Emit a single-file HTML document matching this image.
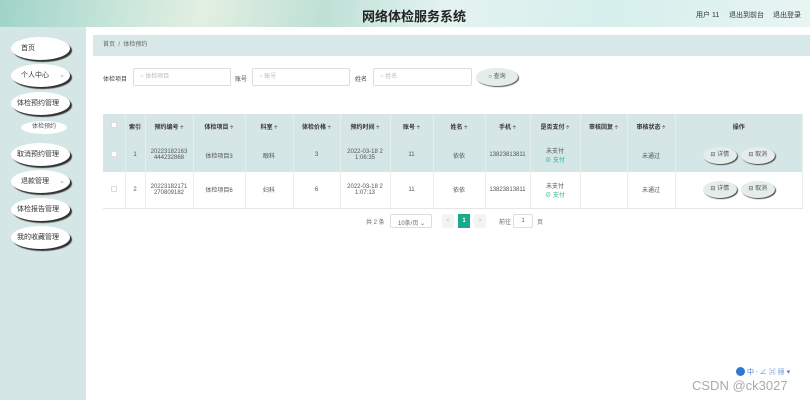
<!DOCTYPE html>
<html><head><meta charset="utf-8"><style>
*{margin:0;padding:0;box-sizing:border-box}
body{width:810px;height:400px;overflow:hidden;background:#fff;font-family:"Liberation Sans","Noto Sans CJK SC",sans-serif;font-size:6px;color:#555;position:relative}
.hdr{position:absolute;left:0;top:0;width:810px;height:27px;background:linear-gradient(100deg,#9fd3c9 0%,#c9e6da 15%,#e3efe2 25%,#bfe0d6 40%,#e4f3f0 55%,#d6efec 75%,#e8f5f3 100%)}
.title{position:absolute;left:362px;top:6px;font-size:13px;font-weight:bold;color:#222}
.hr{position:absolute;top:10px;font-size:7px;color:#333}
.side{position:absolute;left:0;top:27px;width:86px;height:373px;background:#d5e6e6}
.nb{position:absolute;left:11px;width:59px;height:23px;background:#fff;border-radius:50%;box-shadow:2px 2px 1px #333;font-size:7px;color:#333;line-height:23px;padding-left:10px}
.sub{position:absolute;left:21px;top:121px;width:46px;height:13px;background:#fff;border-radius:50%;font-size:6px;line-height:13px;text-align:center}
.bc{position:absolute;left:93px;top:35px;width:717px;height:21px;background:#d8e8e8;font-size:6px;line-height:21px;padding-left:10px;color:#666}
.lbl{position:absolute;top:74px;font-size:6px;color:#444}
.inp{position:absolute;top:68px;height:18px;border:1px solid #ddd;border-radius:2px;font-size:6px;color:#bbb;line-height:16px;padding-left:6px}
.btn{position:absolute;left:476px;top:68px;width:42px;height:18px;border-radius:50%;background:#e4ecec;box-shadow:1px 1px 1px #555;font-size:6px;line-height:18px;text-align:center;color:#555}
table{position:absolute;left:103px;top:114px;width:700px;border-collapse:collapse;font-size:6px;text-align:center}
td,th{border-right:1px solid #e8eeee;color:#555;font-weight:normal;padding:0}
th{height:24px;background:#d6e6e6;font-weight:bold;color:#333}
tr.r1 td{background:#d4e6e6;height:34px}
tr.r2 td{background:#fff;height:36px;border-bottom:1px solid #e6e6e6}
.cb{display:inline-block;width:6px;height:6px;background:#fff;border:1px solid #ddd}
.ob{display:inline-block;width:34px;height:17px;border-radius:50%;background:#e4ecec;box-shadow:1px 1px 1px #444;line-height:17px;margin:0 2px;font-size:6px}
.g{color:#2cb08a}
.pg{position:absolute;top:214px;font-size:6px;color:#666}
</style></head><body>
<div class="hdr"></div>
<div class="title">网络体检服务系统</div>
<div class="hr" style="left:696px">用户 11</div>
<div class="hr" style="left:729px">退出到前台</div>
<div class="hr" style="left:773px">退出登录</div>
<div class="side"></div>
<div class="nb" style="top:37px">首页</div>
<div class="nb" style="top:64px">个人中心 <span style="margin-left:8px;color:#999">⌄</span></div>
<div class="nb" style="top:92px;padding-left:6px">体检预约管理</div>
<div class="sub">体检预约</div>
<div class="nb" style="top:143px;padding-left:6px">取消预约管理</div>
<div class="nb" style="top:170px">退款管理 <span style="margin-left:8px;color:#999">⌄</span></div>
<div class="nb" style="top:198px;padding-left:6px">体检报告管理</div>
<div class="nb" style="top:226px;padding-left:6px">我的收藏管理</div>
<div class="bc">首页 &nbsp;/&nbsp; 体检预约</div>
<div class="lbl" style="left:103px">体检项目</div>
<div class="inp" style="left:133px;width:98px">○ 体检项目</div>
<div class="lbl" style="left:235px">账号</div>
<div class="inp" style="left:252px;width:98px">○ 账号</div>
<div class="lbl" style="left:355px">姓名</div>
<div class="inp" style="left:373px;width:99px">○ 姓名</div>
<div class="btn">○ 查询</div>
<table>
<tr><th style="width:22px"><span class="cb"></span></th><th style="width:20px">索引</th><th style="width:48px">预约编号 ÷</th><th style="width:52px">体检项目 ÷</th><th style="width:48px">科室 ÷</th><th style="width:47px">体检价格 ÷</th><th style="width:50px">预约时间 ÷</th><th style="width:43px">账号 ÷</th><th style="width:52px">姓名 ÷</th><th style="width:45px">手机 ÷</th><th style="width:50px">是否支付 ÷</th><th style="width:47px">审核回复 ÷</th><th style="width:48px">审核状态 ÷</th><th>操作</th></tr>
<tr class="r1"><td><span class="cb"></span></td><td>1</td><td>20223182163<br>444232868</td><td>体检项目3</td><td>眼科</td><td>3</td><td>2022-03-18 2<br>1:06:35</td><td>11</td><td>依依</td><td>13823813811</td><td>未支付<br><span class="g">⊘ 支付</span></td><td></td><td>未通过</td><td><span class="ob">⊟ 详情</span><span class="ob">⊟ 取消</span></td></tr>
<tr class="r2"><td><span class="cb"></span></td><td>2</td><td>20223182171<br>270809182</td><td>体检项目6</td><td>妇科</td><td>6</td><td>2022-03-18 2<br>1:07:13</td><td>11</td><td>依依</td><td>13823813811</td><td>未支付<br><span class="g">⊘ 支付</span></td><td></td><td>未通过</td><td><span class="ob">⊟ 详情</span><span class="ob">⊟ 取消</span></td></tr>
</table>
<div class="pg" style="left:366px;top:217px">共 2 条</div>
<div class="pg" style="left:390px;width:42px;height:14px;border:1px solid #ddd;border-radius:2px;padding:3px 0 0 7px">10条/页 ⌄</div>
<div class="pg" style="left:442px;width:12px;height:14px;background:#f4f4f5;text-align:center;line-height:14px;color:#bbb">&lt;</div>
<div class="pg" style="left:458px;width:12px;height:14px;background:#1aaa8a;color:#fff;text-align:center;line-height:14px;font-weight:bold">1</div>
<div class="pg" style="left:474px;width:12px;height:14px;background:#f4f4f5;text-align:center;line-height:14px;color:#bbb">&gt;</div>
<div class="pg" style="left:499px;top:217px">前往</div>
<div class="pg" style="left:513px;width:20px;height:14px;border:1px solid #ddd;border-radius:2px;text-align:center;line-height:12px">1</div>
<div class="pg" style="left:537px;top:217px">页</div>
<div style="position:absolute;left:747px;top:367px;font-size:7px;color:#4a7fd0">中 ⸱ ∠ ⌘ ▦ ▾</div>
<div style="position:absolute;left:736px;top:367px;width:9px;height:9px;border-radius:50%;background:#2f78d6"></div>
<div style="position:absolute;left:692px;top:378px;font-size:13px;color:#aaa">CSDN @ck3027</div>
</body></html>
